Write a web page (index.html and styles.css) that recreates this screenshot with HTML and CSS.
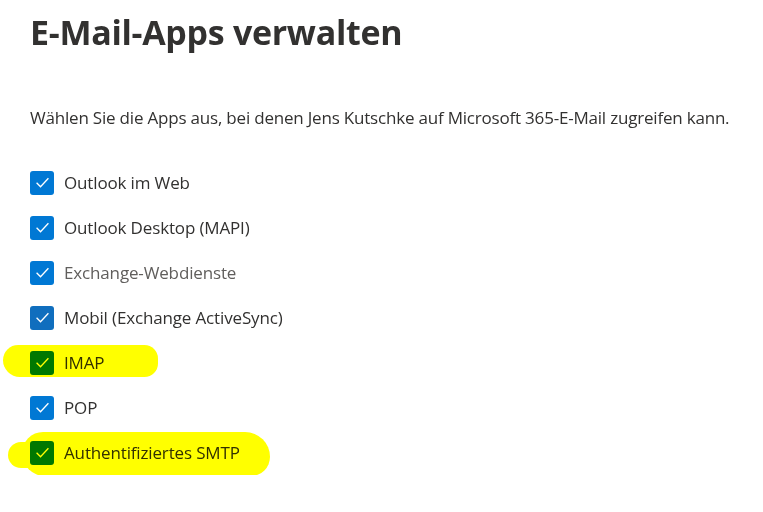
FILE: index.html
```html
<!DOCTYPE html>
<html lang="de">
<head>
  <meta charset="UTF-8" />
  <meta name="viewport" content="width=device-width, initial-scale=1.0" />
  <title>E-Mail-Apps verwalten</title>
  <link rel="stylesheet" href="styles.css">
</head>
<body>
  <div class="panel">
    <h1 class="panel-title">E-Mail-Apps verwalten</h1>
    <p class="panel-desc">Wählen Sie die Apps aus, bei denen Jens Kutschke auf Microsoft 365-E-Mail zugreifen kann.</p>

    <ul class="app-list">
      <li class="app-item">
        <span class="check"><svg viewBox="0 0 16 16"><path d="M3.5 8.2l3 3 6-6.4"/></svg></span>
        <span class="app-label">Outlook im Web</span>
      </li>
      <li class="app-item">
        <span class="check"><svg viewBox="0 0 16 16"><path d="M3.5 8.2l3 3 6-6.4"/></svg></span>
        <span class="app-label">Outlook Desktop (MAPI)</span>
      </li>
      <li class="app-item">
        <span class="check"><svg viewBox="0 0 16 16"><path d="M3.5 8.2l3 3 6-6.4"/></svg></span>
        <span class="app-label muted">Exchange-Webdienste</span>
      </li>
      <li class="app-item">
        <span class="check hover"><svg viewBox="0 0 16 16"><path d="M3.5 8.2l3 3 6-6.4"/></svg></span>
        <span class="app-label">Mobil (Exchange ActiveSync)</span>
      </li>
      <li class="app-item marked">
        <span class="check"><svg viewBox="0 0 16 16"><path d="M3.5 8.2l3 3 6-6.4"/></svg></span>
        <span class="app-label">IMAP</span>
        <span class="marker marker-imap"></span>
      </li>
      <li class="app-item">
        <span class="check"><svg viewBox="0 0 16 16"><path d="M3.5 8.2l3 3 6-6.4"/></svg></span>
        <span class="app-label">POP</span>
      </li>
      <li class="app-item marked">
        <span class="check"><svg viewBox="0 0 16 16"><path d="M3.5 8.2l3 3 6-6.4"/></svg></span>
        <span class="app-label">Authentifiziertes SMTP</span>
        <span class="marker marker-smtp-a"></span>
        <span class="marker marker-smtp-b"></span>
      </li>
    </ul>
  </div>
</body>
</html>
```

FILE: styles.css
```css
body {
  font-family: "Open Sans", "Noto Sans", Arial, sans-serif;
  background-color: #fff;
  color: #323130;
  margin: 0;
}
.panel {
  padding: 8px 30px 0 30px;
}
.panel-title {
  font-size: 34px;
  font-weight: 700;
  line-height: 48px;
  margin: 0;
  letter-spacing: -0.3px;
}
.panel-desc {
  font-size: 17px;
  line-height: 22px;
  margin: 51px 0 0 0;
  letter-spacing: -0.2px;
}
.app-list {
  list-style: none;
  margin: 31px 0 0 0;
  padding: 0;
}
.app-item {
  position: relative;
  display: flex;
  align-items: center;
  height: 45px;
}
.check {
  width: 24px;
  height: 24px;
  border-radius: 3px;
  background-color: #0078d4;
  display: flex;
  align-items: center;
  justify-content: center;
  flex-shrink: 0;
}
.check.hover {
  background-color: #106ebe;
}
.check svg {
  width: 21px;
  height: 21px;
  fill: none;
  stroke: #fff;
  stroke-width: 1;
}
.app-label {
  margin-left: 10px;
  font-size: 17px;
  letter-spacing: -0.15px;
}
.app-label.muted {
  color: #605e5c;
}
.marker {
  position: absolute;
  background-color: #ffff00;
  mix-blend-mode: multiply;
  pointer-events: none;
}
.marker-imap {
  left: -27px;
  top: 5px;
  width: 155px;
  height: 32px;
  border-radius: 18px 16px 16px 20px;
}
.marker-smtp-a {
  left: -22px;
  top: 12px;
  width: 120px;
  height: 26px;
  border-radius: 13px;
}
.marker-smtp-b {
  left: -8px;
  top: 2px;
  width: 248px;
  height: 44px;
  border-radius: 22px 26px 20px 24px;
}
```
